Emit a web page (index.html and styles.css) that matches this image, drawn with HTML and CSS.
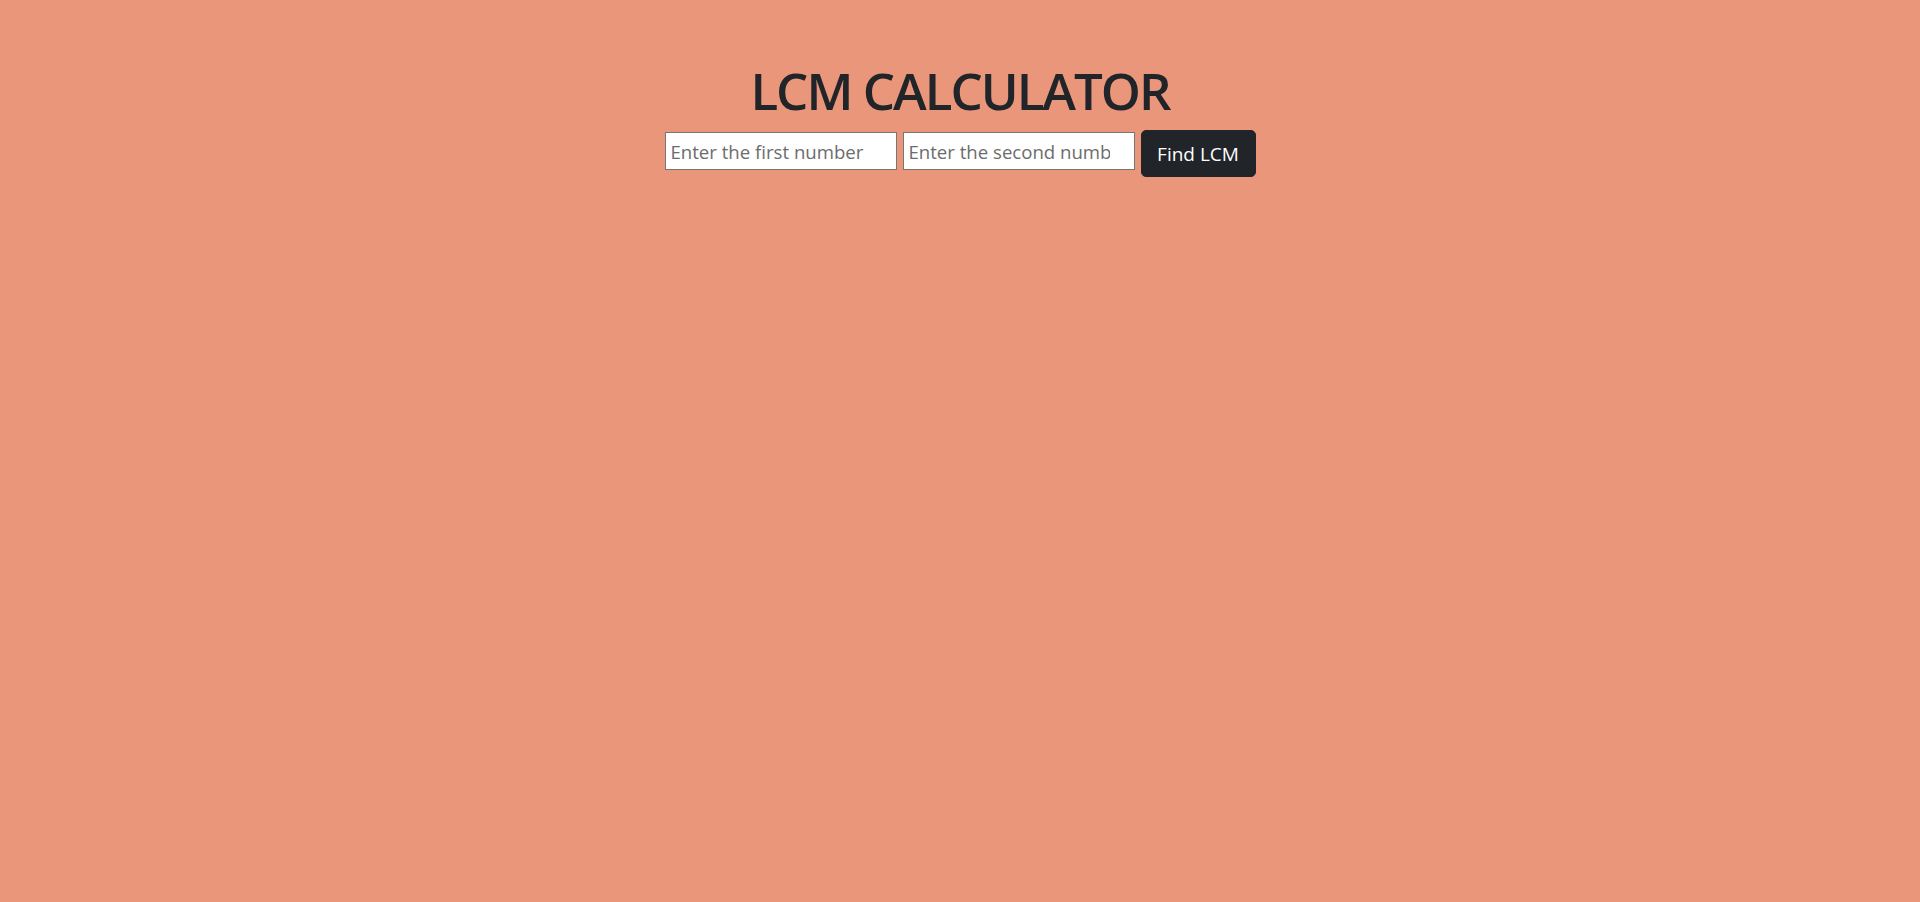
FILE: index.html
```html
<!DOCTYPE html>
<html lang="en">
<head>
<meta charset="utf-8">
<title>LCM Calculator</title>
<link rel="stylesheet" href="styles.css">
</head>
<body>
<main class="page">
  <h1 class="title">LCM CALCULATOR</h1>
  <form class="calc-form" onsubmit="return false;">
    <input class="num-input" type="number" placeholder="Enter the first number">
    <input class="num-input" type="number" placeholder="Enter the second number">
    <button class="btn-find" type="submit">Find LCM</button>
  </form>
</main>
</body>
</html>
```
FILE: styles.css
```css
html, body {
  margin: 0;
  padding: 0;
  height: 100%;
}
body {
  background: #e9967a;
  color: #212529;
  font-family: "Open Sans", "Noto Sans", sans-serif;
}
.page {
  display: flex;
  flex-direction: column;
  align-items: center;
  padding-top: 59px;
}
.title {
  margin: 0;
  font-size: 51px;
  line-height: 62px;
  font-weight: 600;
  letter-spacing: -2px;
}
.calc-form {
  display: flex;
  align-items: flex-start;
  gap: 6px;
  margin-top: 9px;
}
.num-input {
  box-sizing: border-box;
  width: 232px;
  height: 38px;
  margin-top: 2px;
  padding: 1px 24px 1px 5px;
  border: 1px solid #767676;
  border-radius: 0;
  background: #fff;
  font-family: "Open Sans", "Noto Sans", sans-serif;
  font-size: 18.6px;
  color: #212529;
  -moz-appearance: textfield;
}
.num-input::-webkit-outer-spin-button,
.num-input::-webkit-inner-spin-button {
  -webkit-appearance: none;
  margin: 0;
}
.num-input::placeholder {
  color: #6c6c6c;
}
.btn-find {
  box-sizing: border-box;
  width: 115px;
  height: 47px;
  padding: 0;
  border: 1px solid #212529;
  border-radius: 5px;
  background: #212529;
  color: #fff;
  font-family: "Open Sans", "Noto Sans", sans-serif;
  font-size: 19px;
  cursor: pointer;
}
```
